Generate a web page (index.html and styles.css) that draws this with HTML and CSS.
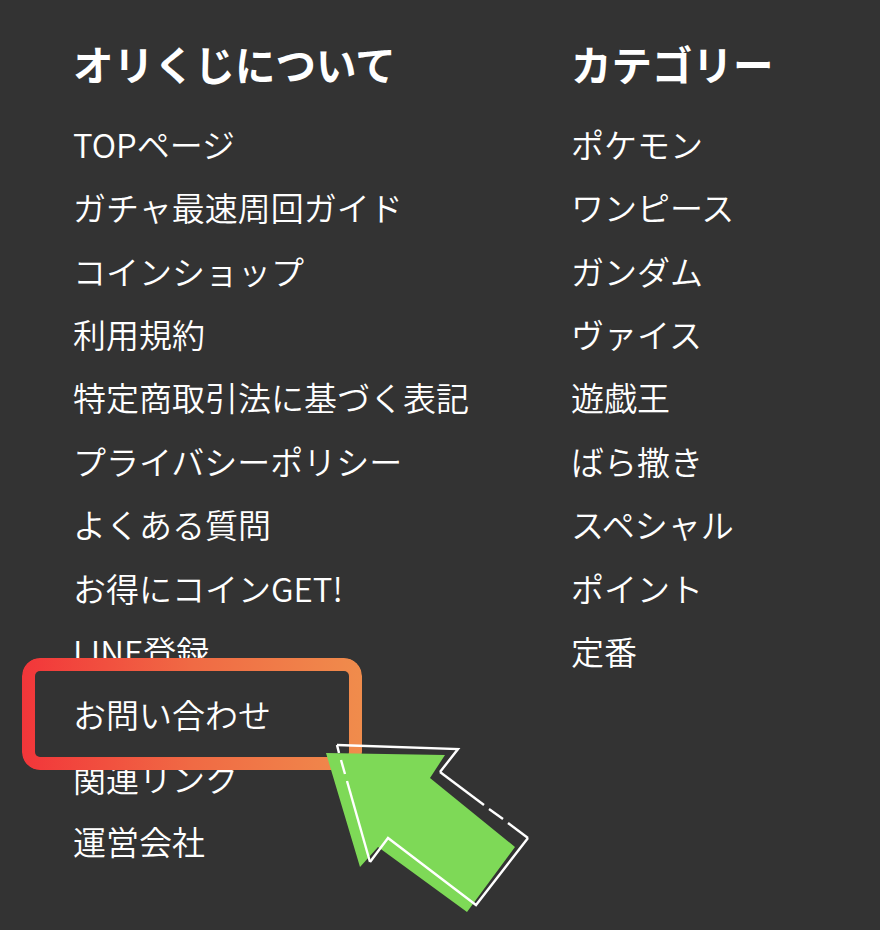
FILE: index.html
```html
<!DOCTYPE html>
<html lang="ja">
<head>
<meta charset="utf-8">
<title>フッター</title>
<link rel="stylesheet" href="styles.css">
</head>
<body>
<footer class="footer">
  <div class="columns">
    <section class="col">
      <h2 class="col-title">オリくじについて</h2>
      <ul class="links">
        <li>TOPページ</li>
        <li>ガチャ最速周回ガイド</li>
        <li>コインショップ</li>
        <li>利用規約</li>
        <li>特定商取引法に基づく表記</li>
        <li>プライバシーポリシー</li>
        <li>よくある質問</li>
        <li>お得にコインGET!</li>
        <li>LINE登録</li>
        <li>お問い合わせ</li>
        <li>関連リンク</li>
        <li>運営会社</li>
      </ul>
    </section>
    <section class="col">
      <h2 class="col-title">カテゴリー</h2>
      <ul class="links">
        <li>ポケモン</li>
        <li>ワンピース</li>
        <li>ガンダム</li>
        <li>ヴァイス</li>
        <li>遊戯王</li>
        <li>ばら撒き</li>
        <li>スペシャル</li>
        <li>ポイント</li>
        <li>定番</li>
      </ul>
    </section>
  </div>
  <div class="highlight"></div>
  <svg class="arrow" viewBox="0 0 880 930" width="880" height="930" aria-hidden="true">
    <polygon class="arrow-fill" points="326,753 445,755 430,778 515,847 467,912 378,847 360,867"/>
    <g class="arrow-line">
      <polyline points="337,745 458,749 440,772"/>
      <line x1="440" y1="772" x2="484" y2="805"/>
      <line x1="489" y1="809" x2="503" y2="819"/>
      <line x1="508" y1="823" x2="528" y2="838"/>
      <polyline points="528,838 476,905 388,838 370,862"/>
      <line x1="370" y1="862" x2="347" y2="781"/>
      <line x1="345" y1="774" x2="341" y2="760"/>
      <line x1="339" y1="753" x2="337" y2="745"/>
    </g>
  </svg>
</footer>
</body>
</html>
```

FILE: styles.css
```css
html, body {
  margin: 0;
  padding: 0;
  background: #333333;
}

.footer {
  position: relative;
  width: 880px;
  height: 930px;
  overflow: hidden;
  font-family: "Noto Sans CJK JP", "Noto Sans", sans-serif;
  color: #ffffff;
}

.columns {
  display: grid;
  grid-template-columns: 498px 1fr;
  padding: 34px 0 0 73px;
}

.col-title {
  margin: 0;
  font-size: 40.5px;
  font-weight: 700;
  line-height: 60px;
}

.links {
  list-style: none;
  margin: 19px 0 0;
  padding: 0;
}

.links li {
  font-size: 33px;
  font-weight: 350;
  line-height: 63.36px;
  white-space: nowrap;
}

.highlight {
  position: absolute;
  left: 22px;
  top: 658px;
  width: 340px;
  height: 112px;
  box-sizing: border-box;
  border-radius: 18px;
  padding: 13px;
  background: linear-gradient(90deg, #f2363a 0%, #f06a44 50%, #f08c4c 100%);
  -webkit-mask: linear-gradient(#000 0 0) content-box, linear-gradient(#000 0 0);
  -webkit-mask-composite: xor;
  mask-composite: exclude;
}

.arrow {
  position: absolute;
  left: 0;
  top: 0;
}

.arrow-fill {
  fill: #7ed957;
}

.arrow-line polyline,
.arrow-line line {
  fill: none;
  stroke: #ffffff;
  stroke-width: 2.4;
  stroke-linejoin: miter;
}
```
